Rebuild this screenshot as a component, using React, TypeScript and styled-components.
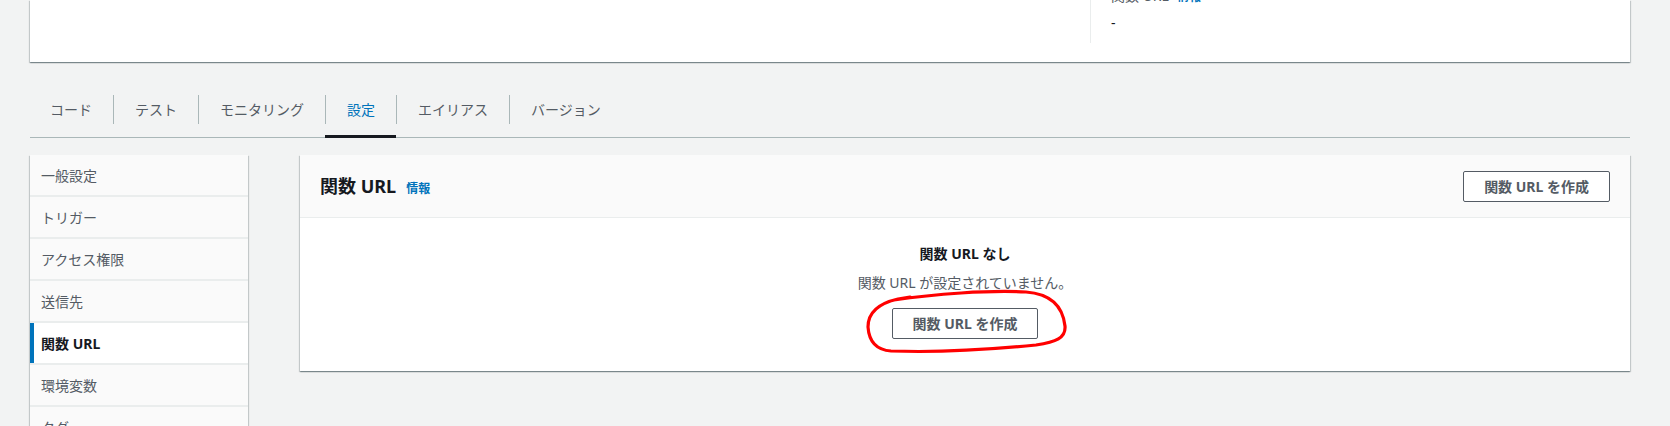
import React from "react";
import styled, { createGlobalStyle, css } from "styled-components";

const GlobalStyle = createGlobalStyle`
  html, body {
    margin: 0;
    padding: 0;
    background: #f2f3f3;
    overflow: hidden;
  }
  body {
    font-family: "Noto Sans", "Noto Sans CJK JP", sans-serif;
    font-size: 14px;
    color: #16191f;
  }
  * { box-sizing: border-box; }
`;

const Page = styled.div`
  padding: 0 40px 0 30px;
`;

const TopCard = styled.div`
  height: 62px;
  background: #ffffff;
  padding: 0 20px;
  overflow: hidden;
  box-shadow: 0 1px 1px 0 rgba(0, 28, 36, 0.3), 1px 1px 1px 0 rgba(0, 28, 36, 0.15),
    -1px 1px 1px 0 rgba(0, 28, 36, 0.15);
`;

const TopGrid = styled.div`
  display: grid;
  grid-template-columns: 2fr 1fr;
  margin-top: -15px;
`;

const TopCol = styled.div<{ $divided?: boolean }>`
  padding-bottom: 9px;
  ${(p) =>
    p.$divided &&
    css`
      border-left: 1px solid #eaeded;
      padding-left: 20px;
    `}
`;

const KeyLabel = styled.div`
  line-height: 22px;
  color: #545b64;
  font-size: 14px;
`;

const InfoLink = styled.a`
  color: #0073bb;
  font-size: 12px;
  font-weight: 700;
  margin-left: 8px;
  text-decoration: none;
`;

const KeyValue = styled.div`
  margin-top: 4px;
  line-height: 22px;
  color: #16191f;
`;

const TabBar = styled.div`
  margin-top: 28px;
  display: flex;
  border-bottom: 1px solid #aab7b8;
`;

const Tab = styled.div<{ $active?: boolean }>`
  position: relative;
  padding: 5px 0 13px;
  ${(p) =>
    p.$active &&
    css`
      &::after {
        content: "";
        position: absolute;
        left: 0;
        right: 0;
        bottom: -1px;
        height: 3px;
        background: #16191f;
      }
    `}
`;

const TabLabel = styled.span<{ $active?: boolean; $first?: boolean }>`
  display: block;
  padding: 0 21px 0 ${(p) => (p.$first ? "20px" : "21px")};
  line-height: 29px;
  font-size: 14px;
  color: ${(p) => (p.$active ? "#0073bb" : "#545b64")};
  border-left: ${(p) => (p.$first ? "none" : "1px solid #aab7b8")};
`;

const Content = styled.div`
  margin-top: 17px;
  display: flex;
  align-items: flex-start;
  gap: 52px;
`;

const Sidebar = styled.nav`
  flex: none;
  width: 218px;
  display: flex;
  flex-direction: column;
  gap: 2px;
  background: #eaeded;
  box-shadow: 0 1px 1px 0 rgba(0, 28, 36, 0.3), 1px 1px 1px 0 rgba(0, 28, 36, 0.15),
    -1px 1px 1px 0 rgba(0, 28, 36, 0.15);
`;

const SideItem = styled.div<{ $active?: boolean }>`
  height: 40px;
  display: flex;
  align-items: center;
  padding-left: 11px;
  font-size: 14px;
  background: ${(p) => (p.$active ? "#ffffff" : "#fafafa")};
  color: ${(p) => (p.$active ? "#16191f" : "#545b64")};
  font-weight: ${(p) => (p.$active ? 700 : 400)};
  box-shadow: ${(p) => (p.$active ? "inset 4px 0 0 #0073bb" : "none")};
`;

const Panel = styled.section`
  flex: 1;
  background: #ffffff;
  box-shadow: 0 1px 1px 0 rgba(0, 28, 36, 0.3), 1px 1px 1px 0 rgba(0, 28, 36, 0.15),
    -1px 1px 1px 0 rgba(0, 28, 36, 0.15);
`;

const PanelHeader = styled.header`
  height: 63px;
  padding: 0 20px;
  display: flex;
  align-items: center;
  justify-content: space-between;
  background: #fafafa;
  border-bottom: 1px solid #eaeded;
`;

const TitleGroup = styled.div`
  display: flex;
  align-items: baseline;
  gap: 10px;
`;

const PanelTitle = styled.h2`
  margin: 0;
  font-size: 18px;
  font-weight: 700;
  line-height: 24px;
  color: #16191f;
`;

const HeaderInfo = styled.a`
  color: #0073bb;
  font-size: 12px;
  font-weight: 700;
  text-decoration: none;
`;

const Button = styled.button`
  height: 31px;
  padding: 0 20px;
  border: 1px solid #545b64;
  border-radius: 2px;
  background: #ffffff;
  color: #545b64;
  font-family: inherit;
  font-size: 14px;
  font-weight: 700;
  line-height: 29px;
  cursor: pointer;
`;

const PanelBody = styled.div`
  padding: 25px 20px 32px;
  display: flex;
  flex-direction: column;
  align-items: center;
  text-align: center;
`;

const EmptyTitle = styled.div`
  line-height: 22px;
  font-weight: 700;
  color: #16191f;
`;

const EmptyText = styled.div`
  margin-top: 7px;
  line-height: 22px;
  color: #545b64;
`;

const ButtonWrap = styled.div`
  margin-top: 14px;
  position: relative;
`;

const Scribble = styled.svg`
  position: absolute;
  left: -28px;
  top: -20px;
  pointer-events: none;
  overflow: visible;
`;

const sideItems = [
  "一般設定",
  "トリガー",
  "アクセス権限",
  "送信先",
  "関数 URL",
  "環境変数",
  "タグ",
  "VPC",
  "モニタリングおよび運用ツール",
  "同時実行",
];

const tabs = ["コード", "テスト", "モニタリング", "設定", "エイリアス", "バージョン"];

export default function App() {
  return (
    <>
      <GlobalStyle />
      <Page>
        <TopCard>
          <TopGrid>
            <TopCol />
            <TopCol $divided>
              <KeyLabel>
                関数 URL<InfoLink>情報</InfoLink>
              </KeyLabel>
              <KeyValue>-</KeyValue>
            </TopCol>
          </TopGrid>
        </TopCard>

        <TabBar>
          {tabs.map((t, i) => (
            <Tab key={t} $active={t === "設定"}>
              <TabLabel $active={t === "設定"} $first={i === 0}>
                {t}
              </TabLabel>
            </Tab>
          ))}
        </TabBar>

        <Content>
          <Sidebar>
            {sideItems.map((s) => (
              <SideItem key={s} $active={s === "関数 URL"}>
                {s}
              </SideItem>
            ))}
          </Sidebar>

          <Panel>
            <PanelHeader>
              <TitleGroup>
                <PanelTitle>関数 URL</PanelTitle>
                <HeaderInfo>情報</HeaderInfo>
              </TitleGroup>
              <Button>関数 URL を作成</Button>
            </PanelHeader>
            <PanelBody>
              <EmptyTitle>関数 URL なし</EmptyTitle>
              <EmptyText>関数 URL が設定されていません。</EmptyText>
              <ButtonWrap>
                <Button>関数 URL を作成</Button>
                <Scribble width="206" height="68" viewBox="0 0 206 68">
                  <path
                    d="M 30 12 C 70 6, 125 2, 162 4 C 188 6, 199 20, 201 38 C 202 50, 192 54, 172 57 C 132 61, 82 65, 27 63 C 12 62, 5 53, 4 39 C 4 26, 12 16, 34 11 L 46 9"
                    fill="none"
                    stroke="#ff0000"
                    strokeWidth="3.2"
                    strokeLinecap="round"
                    strokeLinejoin="round"
                  />
                </Scribble>
              </ButtonWrap>
            </PanelBody>
          </Panel>
        </Content>
      </Page>
    </>
  );
}
